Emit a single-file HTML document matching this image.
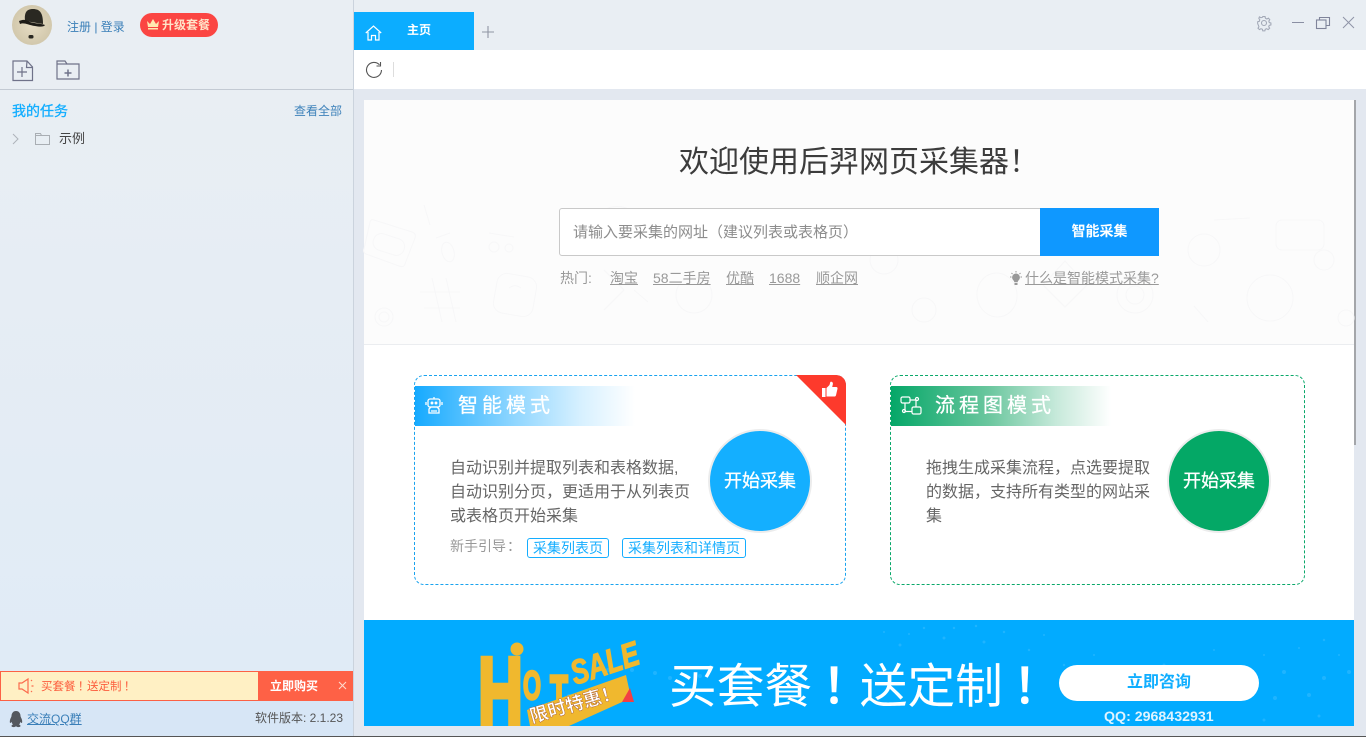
<!DOCTYPE html>
<html lang="zh"><head><meta charset="utf-8"><title>后羿网页采集器</title>
<style>
*{box-sizing:border-box;margin:0;padding:0}
html,body{width:1366px;height:737px;overflow:hidden;background:#e3e8f0;font-family:"Liberation Sans","Noto Sans CJK SC",sans-serif;text-spacing-trim:space-all}
.a{position:absolute;white-space:nowrap}
svg{position:absolute;overflow:visible}
.u{text-decoration:underline}
.x{position:relative;left:.21em}
.m{-webkit-text-stroke:.3px currentColor}
</style></head><body>
<div class="a" style="left:0;top:0;width:354px;height:737px;background:linear-gradient(#e9eef3 0,#e9eef3 90px,#e0ebf6 671px,#e0ebf6 701px);border-right:1px solid #cbd3dd"></div>
<div class="a" style="left:0;top:701px;width:353px;height:36px;background:#d7e6f6"></div>
<div class="a" style="left:354px;top:0;width:1012px;height:50px;background:#e9eef3"></div>

<svg style="left:0;top:0" width="60" height="50">
<defs><radialGradient id="av"><stop offset="0" stop-color="#e6dcc4"/><stop offset="1" stop-color="#d2c8ac"/></radialGradient></defs>
<circle cx="32" cy="25" r="20" fill="url(#av)"/>
<path d="M25 21C24 12 27 9 33 9 40 9 43 13 43 24z" fill="#2a2822"/>
<path d="M19 21C24 19 26 20 28 21 33 24 40 23 45 25 44 27 40 27 35 26 28 25 24 22 20 24z" fill="#1d1b17"/>
<rect x="28.500" y="35" width="5" height="3.500" rx="1.500" fill="#2a2822"/>
</svg>
<div class="a" style="left:67px;top:18px;font-size:12px;line-height:18px;color:#3a7fb8">注册 | 登录</div>
<div class="a" style="left:140px;top:13px;width:78px;height:24px;border-radius:12px;background:#fb4542"></div>
<svg style="left:146px;top:18px" width="14" height="12"><path d="M1 3l3 3 3-5 3 5 3-3-1 6H2z" fill="#ffe9b0"/><rect x="2" y="10" width="10" height="1.500" fill="#ffe9b0"/></svg>
<div class="a" style="left:162px;top:17px;font-size:12px;line-height:16px;font-weight:bold;color:#ffe3c8">升级套餐</div>

<svg style="left:12px;top:60px" width="22" height="22" fill="none" stroke="#6f7289" stroke-width="1.200"><path d="M1 1h14l5.500 6v13.500H1z"/><path d="M15 1l-.5 6.500h6"/><path d="M10 7v10M5 12h10"/></svg>
<svg style="left:56px;top:60px" width="24" height="20" fill="none" stroke="#6f7289" stroke-width="1.200"><path d="M1 19V1h8l2 3h12v15z"/><path d="M1 4h10"/><path d="M12 9.500v7M8.500 13h7" stroke-width="1.500"/></svg>
<div class="a" style="left:0;top:89px;width:353px;height:1px;background:#c3cad3"></div>
<div class="a m" style="left:12px;top:101px;font-size:14px;line-height:20px;color:#11adff">我的任务</div>
<div class="a" style="left:294px;top:103px;font-size:12px;line-height:16px;color:#3e82ba">查看全部</div>
<svg style="left:12px;top:133px" width="8" height="12" fill="none" stroke="#aeb3ba"><path d="M1 1l5 5-5 5"/></svg>
<svg style="left:35px;top:133px" width="15" height="12" fill="none" stroke="#a9aeb3"><path d="M.5 11.500V.5h5l1 2h8v9z"/><path d="M.5 2.500h6"/></svg>
<div class="a" style="left:59px;top:130px;font-size:13px;line-height:17px;color:#444">示例</div>

<div class="a" style="left:0;top:671px;width:353px;height:30px;background:#fff0c4;border:1px solid #fc6145"></div>
<div class="a" style="left:258px;top:671px;width:95px;height:30px;background:#fe6146"></div>
<svg style="left:18px;top:678px" width="16" height="16" fill="none" stroke="#fb6a4c" stroke-width="1.200"><path d="M1 5h3l6-4v14l-6-4H1z"/><path d="M13 3l1-1M13.500 8h2M13 13l1 1"/></svg>
<div class="a" style="left:41px;top:679px;font-size:11.500px;line-height:16px;color:#fc5c3c">买套餐<span class="x">！</span>送定制<span class="x">！</span></div>
<div class="a" style="left:270px;top:678px;font-size:12px;line-height:16px;font-weight:bold;color:#fff">立即购买</div>
<svg style="left:338px;top:681px" width="9" height="10" stroke="#ffd9cc" stroke-width="1.100"><path d="M1 1l7 7M8 1l-7 7"/></svg>
<svg style="left:9px;top:711px" width="14" height="17"><path d="M7 0c3 0 4.500 2.500 4.500 5 0 1 1 2 1.500 4 .5 2.500 0 3.500-.8 2.800l-.7-1c-.2 1-.7 2-1.500 2.600 1 .6 1.500 1 1.500 1.600 0 1-2 1.300-3 1-.6-.2-.8-.5-1.500-.5s-.9.300-1.500.5c-1 .3-3 0-3-1 0-.6.500-1 1.500-1.600C3.200 12.800 2.700 11.800 2.500 10.800l-.7 1c-.8.700-1.300-.3-.8-2.800.5-2 1.500-3 1.500-4C2.500 2.500 4 0 7 0z" fill="#54585e"/></svg>
<div class="a u" style="left:27px;top:711px;font-size:12px;line-height:17px;color:#3a7fb8">交流QQ群</div>
<div class="a" style="left:255px;top:710px;font-size:12px;line-height:17px;color:#555">软件版本: 2.1.23</div>

<div class="a" style="left:354px;top:12px;width:120px;height:38px;background:#0cadff"></div>
<svg style="left:365px;top:25px" width="17" height="16" fill="none" stroke="#fff" stroke-width="1.200"><path d="M.8 8L8.500 1l7.700 7"/><path d="M3 7v8h3.500v-4.500h4V15H14V7"/></svg>
<div class="a" style="left:407px;top:22px;font-size:12px;line-height:17px;font-weight:bold;color:#fff">主页</div>
<svg style="left:482px;top:26px" width="12" height="12" stroke="#8f95a3" stroke-width="1.100"><path d="M6 0v12M0 6h12"/></svg>
<div class="a" style="left:354px;top:50px;width:1012px;height:39px;background:#fff"></div>
<svg style="left:365px;top:61px" width="18" height="18" fill="none" stroke="#555" stroke-width="1.100"><path d="M14.500 3.800A7.500 7.500 0 1 0 16.500 9"/><path d="M15.500 1v4h-4"/></svg>
<div class="a" style="left:393px;top:62px;width:1px;height:15px;background:#ddd"></div>
<svg style="left:1257px;top:16px" width="14" height="14" fill="none" stroke="#a2a8b6" stroke-width="1.100"><circle cx="7" cy="7" r="2.500"/><path d="M5.800.7h2.400l.4 1.800 1.500.7 1.600-.9 1.400 1.600-1 1.500.5 1.500 1.700.5v2l-1.800.5-.5 1.400 1 1.500-1.600 1.500-1.500-1-1.500.6-.4 1.700H5.800l-.4-1.700-1.500-.6-1.500 1-1.600-1.500 1-1.500-.5-1.400L.5 8.100v-2l1.700-.5.500-1.500-1-1.500L2.300 1l1.600.9 1.500-.4z" transform="scale(.96) translate(.2 -.1)"/></svg>
<div class="a" style="left:1292px;top:22px;width:12px;height:1px;background:#8a8fa3"></div>
<svg style="left:1316px;top:17px" width="14" height="12" fill="none" stroke="#7f849a" stroke-width="1.100"><rect x=".5" y="3" width="9.500" height="8.500"/><path d="M3.500 3V.5h10v8H10"/></svg>
<svg style="left:1343px;top:17px" width="11" height="11" stroke="#8f94a6" stroke-width="1"><path d="M0 0l11 11M11 0L0 11"/></svg>

<div class="a" style="left:364px;top:100px;width:990px;height:520px;background:#fff"></div>
<div class="a" style="left:1354px;top:100px;width:2px;height:345px;background:#a4a6aa"></div>
<div class="a" style="left:364px;top:100px;width:990px;height:245px;background:#fcfcfc;border-bottom:1px solid #ebedf0"></div>
<svg style="left:364px;top:200px" width="990" height="144" fill="none" stroke="#f7f7f8" stroke-width="1">
<path d="M10 20l38 12c3 1 4 3 3 6l-10 26c-1 3-3 3-6 2L2 54c-2-1-3-3-2-5l6-27c.5-2 2-3 4-2z"/><rect x="9" y="36" width="32" height="17" rx="8" transform="rotate(18 25 44)"/>
<ellipse cx="84" cy="52" rx="6" ry="10" transform="rotate(-15 84 52)"/><path d="M72 38l14-5"/>
<circle cx="130" cy="47" r="5"/><circle cx="145" cy="48" r="4"/><path d="M125 33l25 4"/>
<path d="M68 78l10 44M82 78l10 44M56 92h40M60 108h36"/>
<rect x="131" y="75" width="40" height="40" rx="10" transform="rotate(10 151 95)"/><path d="M145 88c4-3 8-3 12 0"/>
<circle cx="20" cy="117" r="9"/><circle cx="20" cy="117" r="5"/>
<ellipse cx="633" cy="95" rx="20" ry="22" transform="rotate(-8 633 95)"/><path d="M679 85l22-24 22 24-22 22z"/><circle cx="771" cy="95" r="18"/><circle cx="771" cy="95" r="9"/><circle cx="906" cy="98" r="23"/><circle cx="840" cy="50" r="16"/><rect x="912" y="20" width="48" height="30" rx="6"/>
<circle cx="982" cy="118" r="8"/><path d="M60 5l6 20M240 10c10-6 25-4 30 4M270 90l14 12M830 106l14 16M850 20l36-2"/><circle cx="520" cy="60" r="14"/><circle cx="560" cy="110" r="12"/><path d="M240 70l20 20-20 20"/><circle cx="330" cy="95" r="18"/><circle cx="960" cy="60" r="10"/>
</svg>

<div class="a" style="left:364px;top:141px;width:990px;text-align:center;font-size:30px;line-height:44px;color:#3c3c3c">欢迎使用后羿网页采集器！</div>
<div class="a" style="left:559px;top:208px;width:482px;height:48px;background:#fff;border:1px solid #c9c9c9;border-radius:3px 0 0 3px"></div>
<div class="a" style="left:573px;top:223px;font-size:15px;line-height:20px;color:#8d8d8d">请输入要采集的网址（建议列表或表格页）</div>
<div class="a" style="left:1040px;top:208px;width:119px;height:48px;background:#0f98ff;color:#fff;font-size:14px;font-weight:bold;line-height:47px;text-align:center">智能采集</div>
<div class="a" style="left:560px;top:269px;font-size:14px;line-height:18px;color:#999">热门:</div>
<div class="a u" style="left:610px;top:269px;font-size:14px;line-height:18px;color:#999">淘宝</div>
<div class="a u" style="left:653px;top:269px;font-size:14px;line-height:18px;color:#999">58二手房</div>
<div class="a u" style="left:726px;top:269px;font-size:14px;line-height:18px;color:#999">优酷</div>
<div class="a u" style="left:769px;top:269px;font-size:14px;line-height:18px;color:#999">1688</div>
<div class="a u" style="left:816px;top:269px;font-size:14px;line-height:18px;color:#999">顺企网</div>
<svg style="left:1009px;top:271px" width="14" height="15"><path d="M7 2.500a4 4 0 0 0-2.500 7c.5.5.8 1.200.8 1.800h3.400c0-.6.300-1.300.8-1.800A4 4 0 0 0 7 2.500z" fill="#999"/><rect x="5.500" y="12" width="3" height="2" fill="#999"/><path d="M7 0v1.500M1 6h1.500M11.500 6H13M2.500 2l1 1M11.500 2l-1 1" stroke="#999"/></svg>
<div class="a u" style="left:1025px;top:269px;font-size:14px;line-height:18px;color:#999">什么是智能模式采集?</div>

<!-- Card 1 -->
<div class="a" style="left:414px;top:375px;width:432px;height:210px;border:1px dashed #1aa3ee;border-radius:10px;background:#fff"></div>
<div class="a" style="left:415px;top:386px;width:220px;height:40px;background:linear-gradient(90deg,#16aaff 0,#8fd6ff 45%,#d6f0ff 75%,#fff 100%)"></div>
<svg style="left:425px;top:396px" width="19" height="19" fill="none" stroke="#fff" stroke-width="1.300"><rect x="3" y="3" width="12" height="8" rx="2"/><path d="M6 11h6l2 2v4H4v-4zM9 1v2M1 6v3M17 6v3M6 15h6"/><circle cx="7" cy="7" r=".8" fill="#fff"/><circle cx="11" cy="7" r=".8" fill="#fff"/></svg>
<div class="a m" style="left:458px;top:393px;font-size:20px;line-height:26px;letter-spacing:4px;color:#fff">智能模式</div>
<svg style="left:796px;top:375px" width="50" height="50"><path d="M0 0H40a10 10 0 0 1 10 10V50z" fill="#fd3a2c"/><path d="M26 13h3.500v9H26zM30.500 13l3-3 .8-3c1.800-.8 3 .7 2.500 2.500l-.6 2.500h4c1 0 1.500.8 1.300 1.700l-1.500 6.500c-.2.800-.8 1.300-1.700 1.300H30.500z" fill="#fff"/></svg>
<div class="a m" style="left:708px;top:429px;width:104px;height:104px;border-radius:50%;background:#14afff;border:2px solid #ececec;color:#fff;font-size:18px;line-height:100px;text-align:center">开始采集</div>
<div class="a" style="left:450px;top:457px;font-size:16px;line-height:24px;color:#666">自动识别并提取列表和表格数据,<br>自动识别分页，更适用于从列表页<br>或表格页开始采集</div>
<div class="a" style="left:450px;top:537px;font-size:14px;line-height:18px;color:#999">新手引导<span style="position:relative;left:1px">：</span></div>
<div class="a" style="left:527px;top:538px;width:82px;height:20px;border:1px solid #14adff;border-radius:3px;font-size:14px;line-height:18px;text-align:center;color:#14adff">采集列表页</div>
<div class="a" style="left:622px;top:538px;width:124px;height:20px;border:1px solid #14adff;border-radius:3px;font-size:14px;line-height:18px;text-align:center;color:#14adff">采集列表和详情页</div>

<!-- Card 2 -->
<div class="a" style="left:890px;top:375px;width:415px;height:210px;border:1px dashed #0aa86a;border-radius:10px;background:#fff"></div>
<div class="a" style="left:891px;top:386px;width:220px;height:40px;background:linear-gradient(90deg,#05a768 0,#6cc79f 45%,#c6e9da 75%,#fff 100%)"></div>
<svg style="left:900px;top:396px" width="22" height="20" fill="none" stroke="#fff" stroke-width="1.200"><rect x="1" y="1" width="9" height="6" rx="1.500"/><rect x="12" y="11" width="9" height="7" rx="1.500"/><path d="M5 7v8.500h7M10 4h6v7"/><circle cx="17" cy="3" r="1.500"/><circle cx="4" cy="15" r="1.500"/></svg>
<div class="a m" style="left:935px;top:393px;font-size:20px;line-height:26px;letter-spacing:4px;color:#fff">流程图模式</div>
<div class="a m" style="left:1167px;top:429px;width:104px;height:104px;border-radius:50%;background:#04a866;border:2px solid #ececec;color:#fff;font-size:18px;line-height:100px;text-align:center">开始采集</div>
<div class="a" style="left:926px;top:457px;font-size:16px;line-height:24px;color:#666">拖拽生成采集流程，点选要提取<br>的数据，支持所有类型的网站采<br>集</div>

<!-- Banner -->
<div class="a" style="left:364px;top:620px;width:990px;height:106px;background:#02abff;overflow:hidden">
<svg style="left:0;top:0" width="990" height="106" fill="#3cbdff" opacity=".5">
<circle cx="222" cy="55" r="2"/><circle cx="205" cy="76" r="2"/><circle cx="198" cy="98" r="1"/><circle cx="244" cy="50" r="2"/><circle cx="268" cy="50" r="2"/><circle cx="291" cy="53" r="2"/><circle cx="306" cy="58" r="2"/><circle cx="336" cy="56" r="2"/><circle cx="381" cy="53" r="2"/><circle cx="416" cy="55" r="2"/><circle cx="440" cy="58" r="2"/><circle cx="536" cy="25" r="1.500"/><circle cx="580" cy="18" r="1.500"/><circle cx="620" cy="22" r="1.500"/><circle cx="665" cy="30" r="1.200"/><circle cx="700" cy="45" r="1.200"/><circle cx="730" cy="35" r="1"/><circle cx="760" cy="50" r="1"/><circle cx="800" cy="45" r="1.500"/><circle cx="826" cy="52" r="2"/><circle cx="860" cy="55" r="2"/><circle cx="890" cy="60" r="2"/><circle cx="920" cy="52" r="2"/><circle cx="960" cy="58" r="2"/><circle cx="985" cy="52" r="2"/><circle cx="860" cy="78" r="2"/><circle cx="911" cy="78" r="2"/><circle cx="945" cy="75" r="2"/><circle cx="955" cy="96" r="1.500"/><circle cx="900" cy="100" r="1.500"/><circle cx="800" cy="92" r="1.500"/>
<circle cx="560" cy="8" r="1.200"/><circle cx="590" cy="8" r="1.200"/><circle cx="612" cy="6" r="1.200"/><circle cx="640" cy="12" r="1.200"/><circle cx="680" cy="15" r="1"/><circle cx="520" cy="12" r="1"/><circle cx="545" cy="14" r="1"/><circle cx="960" cy="20" r="1.200"/><circle cx="935" cy="28" r="1"/><circle cx="900" cy="35" r="1"/><circle cx="850" cy="30" r="1"/><circle cx="975" cy="35" r="1"/>
</svg>
<svg style="left:110px;top:20px" width="180" height="86">
<g fill="#f0b82e" stroke="#f0b82e" font-family="Liberation Sans" font-weight="bold">
<text x="4" y="86" font-size="98" stroke-width="5" textLength="45" lengthAdjust="spacingAndGlyphs">H</text>
<text x="49" y="59" font-size="40" stroke-width="2.500" textLength="18" lengthAdjust="spacingAndGlyphs">O</text>
<text x="76" y="74" font-size="56" stroke-width="3" textLength="18" lengthAdjust="spacingAndGlyphs">T</text>
<text x="101" y="45" font-style="italic" font-size="34" stroke-width="1.200" transform="rotate(-18 101 45)" textLength="70" lengthAdjust="spacingAndGlyphs">SALE</text>
<circle cx="43" cy="9" r="6"/>
</g>
<polygon points="53,70 152,35 157,58 95,86 56,86" fill="#f0b82e"/>
<polygon points="156,48 160,62 148,62" fill="#f23f45"/>
<text x="58" y="83" font-family="Liberation Sans,Noto Sans CJK SC" font-weight="bold" font-size="18.500" fill="#fff" transform="rotate(-16 58 83)" stroke="#a8562e" stroke-width=".4">限时特惠！</text>
</svg>
<div class="a" style="left:305px;top:35px;font-size:47.700px;line-height:66px;color:#fff">买套餐<span class="x" style="-webkit-text-stroke:1.500px #fff">！</span>送定制<span class="x" style="-webkit-text-stroke:1.500px #fff">！</span></div>
<div class="a" style="left:695px;top:45px;width:200px;height:36px;border-radius:18px;background:#fff;color:#10aeff;font-size:16px;font-weight:bold;line-height:35px;text-align:center">立即咨询</div>
<div class="a" style="left:740px;top:88px;font-size:14.200px;line-height:18px;font-weight:bold;color:#dff3ff">QQ: 2968432931</div>
</div>
<div class="a" style="left:0;top:736px;width:1366px;height:1px;background:#555"></div>
</body></html>
